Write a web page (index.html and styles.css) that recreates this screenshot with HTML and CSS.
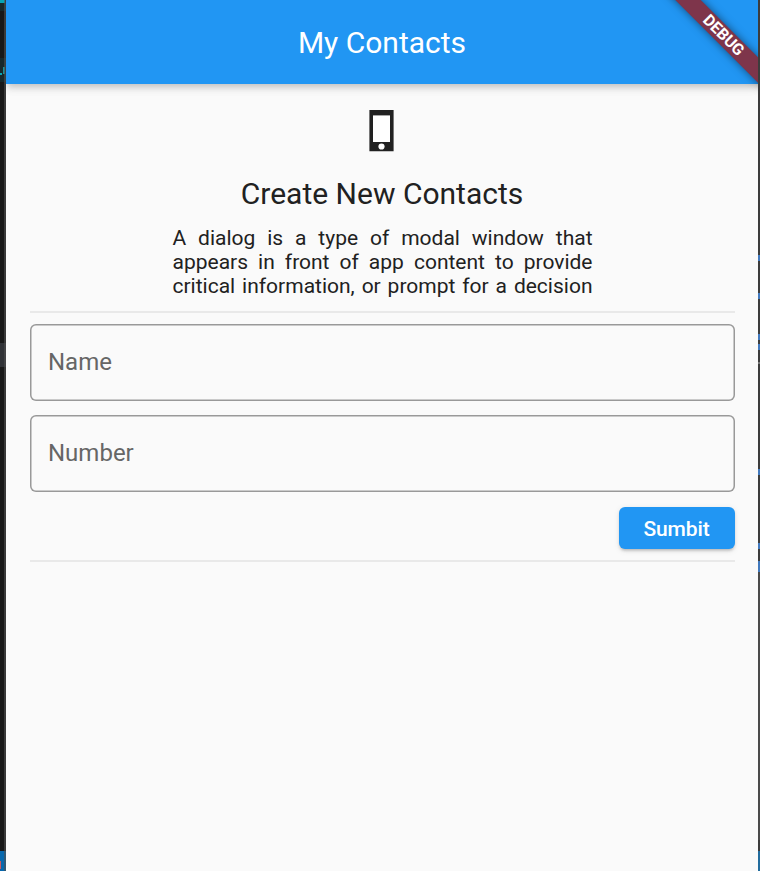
FILE: index.html
```html
<!DOCTYPE html>
<html lang="en">
<head>
<meta charset="utf-8">
<title>My Contacts</title>
<link rel="stylesheet" href="styles.css">
</head>
<body>
<div class="desktop">
  <div class="edge edge-left"></div>
  <div class="window">
    <header class="app-bar"><h1>My Contacts</h1><div class="banner">DEBUG</div></header>
    <main class="content">
      <svg class="phone" width="25" height="42" viewBox="0 0 25 42" aria-hidden="true">
        <path fill="#212121" d="M.4 0h24.2v41.2H.4z"/>
        <path fill="#fff" d="M4 5.4h17v26.6H4z"/>
        <circle cx="12.5" cy="36.5" r="3.1" fill="#fff"/>
      </svg>
      <h2>Create New Contacts</h2>
      <p class="intro">A dialog is a type of modal window that appears in front of app content to provide critical information, or prompt for a decision</p>
      <div class="divider"></div>
      <div class="field">Name</div>
      <div class="field">Number</div>
      <button class="submit">Sumbit</button>
      <div class="divider last"></div>
    </main>
  </div>
  <div class="edge edge-right"></div>
</div>
</body>
</html>
```
FILE: styles.css
```css
* { box-sizing: border-box; }
body { margin: 0; font-family: Roboto, sans-serif; color: #212121; }
.desktop { display: flex; width: 760px; height: 871px; overflow: hidden; }
.edge { flex: none; }
.edge-left {
  width: 6px; margin-right: -6px;
  background:
    linear-gradient(90deg, transparent 4px, rgba(80, 80, 80, .6) 4px),
    linear-gradient(#08a5b5, #08a5b5) 0 0 / 5px 3px no-repeat,
    linear-gradient(#1b8f96, #1b8f96) 3px 67px / 2px 7px no-repeat,
    linear-gradient(#08a5b5, #08a5b5) 0 73px / 2px 2px no-repeat,
    linear-gradient(#c85a64, #c85a64) 0 861px / 1px 8px no-repeat,
    linear-gradient(#17282b 11px, #181818 11px 58px, #17282b 58px 82px, #181818 82px 343px, #303236 343px 367px, #181818 367px 851px, #0768ae 851px);
}
.edge-right {
  width: 2px;
  background:
    linear-gradient(#4279bd, #4279bd) 0 255px / 2px 6px no-repeat,
    linear-gradient(#4279bd, #4279bd) 0 293px / 2px 6px no-repeat,
    linear-gradient(#4279bd, #4279bd) 0 334px / 2px 6px no-repeat,
    linear-gradient(#4279bd, #4279bd) 0 344px / 2px 6px no-repeat,
    linear-gradient(#777, #777) 0 362px / 2px 2px no-repeat,
    linear-gradient(#4279bd, #4279bd) 0 469px / 2px 6px no-repeat,
    linear-gradient(#4279bd, #4279bd) 0 543px / 2px 6px no-repeat,
    linear-gradient(#4279bd, #4279bd) 0 561px / 2px 11px no-repeat,
    linear-gradient(#3c3c3c 572px, #4a4a4a 572px 840px, #3c3c3c 840px 851px, #226c9d 851px);
}
.window {
  position: relative; flex: none;
  width: 752px; margin-left: 6px; overflow: hidden;
  background: #fafafa; border-radius: 0 0 2px 6px;
}
.app-bar {
  position: relative;
  display: flex; align-items: center; justify-content: center;
  height: 84px;
  background: #2196f3; color: #fff;
  box-shadow: 0 3px 6px -1.5px rgba(0, 0, 0, .14), 0 6px 7.5px rgba(0, 0, 0, .06), 0 1.5px 12px rgba(0, 0, 0, .07);
}
h1 { margin: 2px 0 0; font-size: 30px; line-height: 36px; font-weight: 400; }
.banner {
  position: absolute; left: 637px; top: 26px;
  width: 160px; height: 18px; padding-left: 1px;
  transform: rotate(45deg);
  background: #7e354b; color: #fff;
  font-size: 16px; line-height: 17px; font-weight: 700; text-align: center; letter-spacing: -.1px;
  box-shadow: 0 0 9px rgba(0, 0, 0, .5);
}
.content { display: flex; flex-direction: column; padding: 26px 23px 0 24px; }
.phone { align-self: center; margin-right: 2px; }
h2 { margin: 24px 1px 0 0; text-align: center; font-size: 30px; line-height: 36px; font-weight: 400; }
.intro {
  align-self: center;
  width: 420px; margin: 14px 0 0;
  font-size: 21px; line-height: 24px;
  text-align: justify; text-align-last: justify;
}
.divider { height: 2px; margin: 13px 0 11px; background: #e9e9e9; }
.field {
  height: 76.5px; margin-bottom: 15px; padding: 0 18px;
  border-radius: 6px; box-shadow: inset 0 0 0 1.5px #999;
  color: #666; font-size: 24px; line-height: 76px;
}
.field + .field { margin-top: -.3px; margin-bottom: 15.3px; }
.submit {
  align-self: flex-end;
  width: 116px; height: 42px; padding: 2px 1px 0 0; border: 0; border-radius: 6px;
  background: #2196f3; color: #fff;
  font: 500 21px/40px Roboto, sans-serif; letter-spacing: -.1px;
  box-shadow: 0 3px 3px -2px rgba(0, 0, 0, .15), 0 2px 3px rgba(0, 0, 0, .1), 0 1.5px 6px rgba(0, 0, 0, .08);
}
.divider.last { margin: 11px 0 0; }
```
